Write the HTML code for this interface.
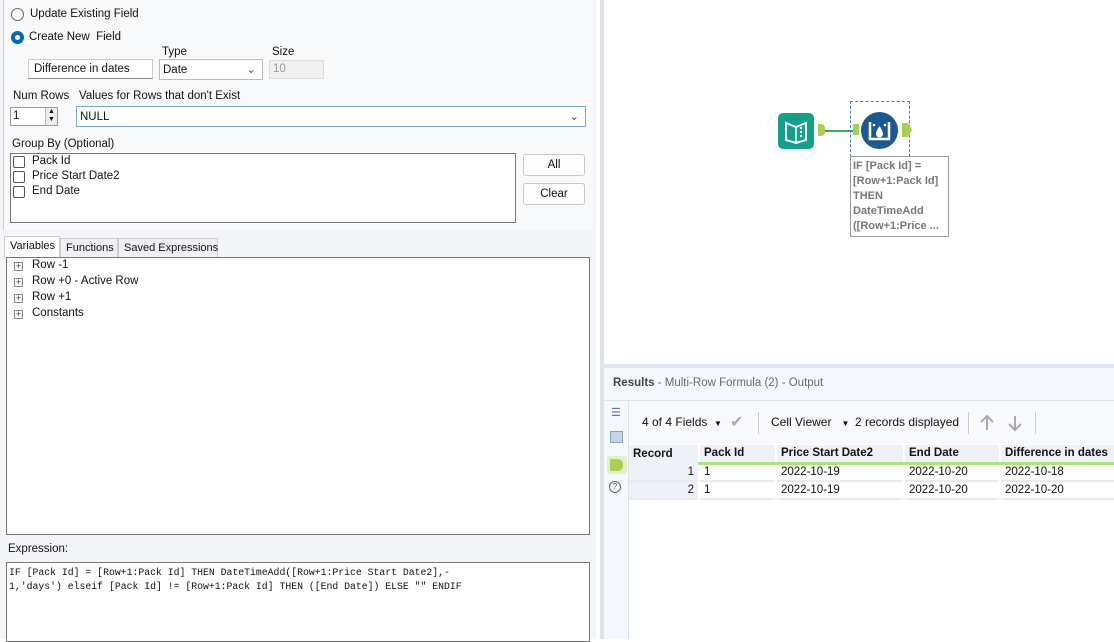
<!DOCTYPE html>
<html><head><style>
*{box-sizing:border-box;margin:0;padding:0}
body{width:1114px;height:639px;overflow:hidden;background:#fff;font-family:"Liberation Sans",sans-serif;font-size:11.5px;color:#111;position:relative}
.a{position:absolute;white-space:nowrap}
.box{position:absolute;background:#fff;border:1px solid #999;white-space:nowrap}
.mono{font-family:"Liberation Mono",monospace;font-size:9.8px}
.cb{position:absolute;width:12px;height:12px;border:1px solid #555;border-radius:2px;background:#fff}
.btn{position:absolute;background:#fdfdfd;border:1px solid #c8c8c8;border-radius:3px;text-align:center;line-height:20px}
.pl{position:absolute;width:9px;height:9px;border:1px solid #888;font-size:9px;line-height:7px;text-align:center;color:#333;background:#fff}
th,td{font-size:11.5px;height:18px;padding:0 4px;text-align:left;border-right:2px solid #fff;white-space:nowrap}
</style></head><body>
<div class="a" style="left:0;top:0;width:596px;height:639px;background:#f3f5f8"></div>
<div class="a" style="left:3px;top:0;width:590px;height:230px;background:#f8f9fb;border-left:1px solid #ccc"></div>
<div class="a" style="left:11px;top:8px;width:13px;height:13px;border:1px solid #666;border-radius:50%;background:#fff"></div>
<div class="a" style="left:30px;top:8px">Update Existing Field</div>
<div class="a" style="left:11px;top:31px;width:13px;height:13px;border-radius:50%;background:#0067c0"><div class="a" style="left:4px;top:4px;width:5px;height:5px;border-radius:50%;background:#fff"></div></div>
<div class="a" style="left:29px;top:31px">Create New &nbsp;Field</div>
<div class="a" style="left:162px;top:46px">Type</div>
<div class="a" style="left:272px;top:46px">Size</div>
<div class="box" style="left:28px;top:59px;width:125px;height:20px;border-color:#ccc;border-bottom-color:#888;padding:3px 5px">Difference in dates</div>
<div class="box" style="left:159px;top:59px;width:104px;height:21px;border-color:#bbb;padding:4px 3px">Date<span class="a" style="right:6px;top:2px;color:#555">&#8964;</span></div>
<div class="box" style="left:269px;top:60px;width:55px;height:19px;background:#f0f0f0;border-color:#ddd;color:#999;padding:2px 3px">10</div>
<div class="a" style="left:13px;top:90px">Num Rows</div>
<div class="a" style="left:79px;top:90px">Values for Rows that don't Exist</div>
<div class="box" style="left:10px;top:107px;width:48px;height:19px;border-color:#999;padding:2px 2px">1</div>
<div class="a" style="left:45px;top:108px;width:12px;height:17px;background:#eee;border-left:1px solid #bbb;font-size:7px;line-height:8px;text-align:center">▲<br>▼</div>
<div class="box" style="left:76px;top:106px;width:510px;height:21px;border-color:#7aa7d6;padding:4px 3px">NULL<span class="a" style="right:6px;top:2px;color:#555">&#8964;</span></div>
<div class="a" style="left:12px;top:138px">Group By (Optional)</div>
<div class="box" style="left:10px;top:153px;width:506px;height:70px;border-color:#777"></div>
<div class="cb" style="left:13px;top:156px"></div><div class="a" style="left:32px;top:155px">Pack Id</div>
<div class="cb" style="left:13px;top:171px"></div><div class="a" style="left:32px;top:170px">Price Start Date2</div>
<div class="cb" style="left:13px;top:186px"></div><div class="a" style="left:32px;top:185px">End Date</div>
<div class="btn" style="left:523px;top:154px;width:62px;height:22px">All</div>
<div class="btn" style="left:523px;top:183px;width:62px;height:22px">Clear</div>
<div class="a" style="left:4px;top:236px;width:56px;height:21px;background:#fff;border:1px solid #ccc;border-bottom:none;padding:3px 5px;font-size:11px">Variables</div>
<div class="a" style="left:60px;top:238px;width:58px;height:19px;background:#eef0f3;border:1px solid #ccc;border-bottom:none;padding:3px 5px;font-size:11px">Functions</div>
<div class="a" style="left:118px;top:238px;width:100px;height:19px;background:#eef0f3;border:1px solid #ccc;border-bottom:none;padding:3px 5px;font-size:11px">Saved Expressions</div>
<div class="box" style="left:6px;top:257px;width:584px;height:278px;border-color:#777"></div>
<div class="pl" style="left:14px;top:262px">+</div><div class="a" style="left:32px;top:259px">Row -1</div>
<div class="pl" style="left:14px;top:278px">+</div><div class="a" style="left:32px;top:275px">Row +0 - Active Row</div>
<div class="pl" style="left:14px;top:294px">+</div><div class="a" style="left:32px;top:291px">Row +1</div>
<div class="pl" style="left:14px;top:310px">+</div><div class="a" style="left:32px;top:307px">Constants</div>
<div class="a" style="left:8px;top:543px;font-size:11.5px">Expression:</div>
<div class="box mono" style="left:6px;top:562px;width:584px;height:80px;border-color:#777;padding:3px 2px;line-height:14px;white-space:pre">IF [Pack Id] = [Row+1:Pack Id] THEN DateTimeAdd([Row+1:Price Start Date2],-
1,'days') elseif [Pack Id] != [Row+1:Pack Id] THEN ([End Date]) ELSE "" ENDIF</div>
<div class="a" style="left:600px;top:0;width:4px;height:639px;background:#dfe3e8"></div>
<div class="a" style="left:778px;top:113px;width:36px;height:36px;border-radius:5px;background:#12a08a"></div>
<svg class="a" style="left:778px;top:113px" width="36" height="36"><path d="M8 10 L18 14 L28 10 V27 L18 30 L8 27Z" fill="none" stroke="#fff" stroke-width="2"/><path d="M18 14V30" stroke="#fff" stroke-width="1.5"/><circle cx="23" cy="15" r="1.2" fill="#fff"/><circle cx="23" cy="19" r="1.2" fill="#fff"/><circle cx="23" cy="23" r="1.2" fill="#fff"/></svg>
<div class="a" style="left:818px;top:124px;width:7px;height:12px;background:#a8d14f;border-radius:0 4px 4px 0"></div>
<div class="a" style="left:825px;top:130px;width:29px;height:2px;background:#3aa860"></div>
<div class="a" style="left:850px;top:101px;width:60px;height:56px;border:1px dashed #3a7bd5"></div>
<div class="a" style="left:853px;top:124px;width:6px;height:11px;background:#a8d14f"></div>
<div class="a" style="left:861px;top:112px;width:37px;height:37px;border-radius:50%;background:#1a5a94"></div>
<svg class="a" style="left:861px;top:112px" width="37" height="37"><path d="M9 10 V27 H28 V10" fill="none" stroke="#fff" stroke-width="2.5"/><path d="M18.5 14 C16 18 15 20 15 22 A3.5 3.5 0 0 0 22 22 C22 20 21 18 18.5 14Z" fill="#fff"/><circle cx="13" cy="13" r="1.3" fill="#fff"/><circle cx="24" cy="13" r="1.3" fill="#fff"/></svg>
<div class="a" style="left:902px;top:123px;width:10px;height:14px;background:#a8d14f;clip-path:polygon(0 0,60% 0,100% 50%,60% 100%,0 100%)"></div>
<div class="a" style="left:850px;top:156px;width:99px;height:81px;border:1px solid #999;background:#fff;color:#777;font-weight:bold;font-size:11px;line-height:15px;padding:2px 2px">IF [Pack Id] =<br>[Row+1:Pack Id]<br>THEN<br>DateTimeAdd<br>([Row+1:Price ...</div>
<div class="a" style="left:604px;top:364px;width:510px;height:4px;background:#dfe6ef"></div>
<div class="a" style="left:604px;top:368px;width:510px;height:271px;background:#f5f8fc"></div>
<div class="a" style="left:613px;top:377px;font-size:11.5px;color:#555"><b style="color:#444">Results</b> <span style="color:#667">- Multi-Row Formula (2) - Output</span></div>
<div class="a" style="left:604px;top:400px;width:510px;height:1px;background:#dde3ea"></div>
<div class="a" style="left:628px;top:401px;width:1px;height:238px;background:#dde3ea"></div>
<div class="a" style="left:629px;top:401px;width:485px;height:238px;background:#fff"></div>
<div class="a" style="left:629px;top:401px;width:485px;height:43px;background:#f7f9fc"></div>
<div class="a" style="left:611px;top:406px;color:#5577aa;font-size:11px">☰</div>
<div class="a" style="left:610px;top:431px;width:13px;height:12px;background:#c5d3e6;border:1px solid #8fa3c0"></div>
<div class="a" style="left:607px;top:456px;width:20px;height:18px;background:#e2f0c4;border-radius:3px"><div class="a" style="left:3px;top:3px;width:13px;height:12px;background:#a8d14f;border-radius:1px 5px 5px 1px"></div></div>
<div class="a" style="left:609px;top:481px;width:12px;height:12px;border:1px solid #666;border-radius:50%;font-size:8px;text-align:center;line-height:10px;color:#555">?</div>
<div class="a" style="left:642px;top:415px;font-size:12px">4 of 4 Fields &nbsp;<span style="font-size:8px">▼</span></div>
<div class="a" style="left:730px;top:412px;color:#aaa;font-size:16px">✔</div>
<div class="a" style="left:758px;top:412px;width:1px;height:22px;background:#ccc"></div>
<div class="a" style="left:771px;top:415px;font-size:12px">Cell Viewer &nbsp;&nbsp;<span style="font-size:8px">▼</span></div>
<div class="a" style="left:855px;top:415px;font-size:12px">2 records displayed</div>
<div class="a" style="left:968px;top:412px;width:1px;height:22px;background:#ccc"></div>
<svg class="a" style="left:978px;top:413px" width="50" height="20"><path d="M9 17V3M3 9L9 3L15 9" fill="none" stroke="#aaa" stroke-width="2"/><path d="M37 3V17M31 11L37 17L43 11" fill="none" stroke="#aaa" stroke-width="2"/></svg>
<div class="a" style="left:1035px;top:412px;width:1px;height:22px;background:#ccc"></div>
<table class="a" style="left:629px;top:445px;border-collapse:collapse;width:490px">
<tr style="background:#eef1f7;font-weight:bold"><th style="width:70px">Record</th><th style="width:77px;border-bottom:3px solid #a8e87a">Pack Id</th><th style="width:128px;border-bottom:3px solid #a8e87a">Price Start Date2</th><th style="width:96px;border-bottom:3px solid #a8e87a">End Date</th><th style="border-bottom:3px solid #a8e87a">Difference in dates</th></tr>
<tr style="border-bottom:2px solid #e6ebf2"><td style="text-align:right;background:#eef1f7">1</td><td>1</td><td>2022-10-19</td><td>2022-10-20</td><td>2022-10-18</td></tr>
<tr style="border-bottom:2px solid #e6ebf2"><td style="text-align:right;background:#eef1f7">2</td><td>1</td><td>2022-10-19</td><td>2022-10-20</td><td>2022-10-20</td></tr>
</table>
</body></html>
